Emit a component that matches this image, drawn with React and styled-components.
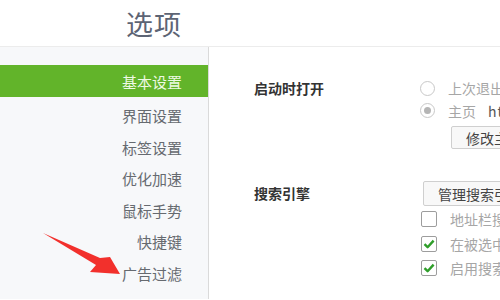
import React from 'react'
import styled, { createGlobalStyle } from 'styled-components'

const GlobalStyle = createGlobalStyle`
  html, body {
    margin: 0;
    padding: 0;
    background: #fff;
    overflow: hidden;
  }
  body {
    font-family: "Noto Sans CJK SC", "Noto Sans", sans-serif;
  }
`

const menu = ['基本设置', '界面设置', '标签设置', '优化加速', '鼠标手势', '快捷键', '广告过滤']

const Page = styled.div`
  position: relative;
  width: 500px;
  height: 300px;
  overflow: hidden;
`

const Header = styled.header`
  height: 47px;
  border-bottom: 1px solid #ececec;
  display: flex;
  align-items: center;
  padding-left: 126px;
  box-sizing: border-box;
  font-size: 27px;
  color: #5d6474;
  letter-spacing: 1px;
`

const Body = styled.div`
  display: flex;
  height: 252px;
`

const Sidebar = styled.nav`
  width: 209px;
  flex-shrink: 0;
  background: #f7f8fa;
  border-right: 1px solid #dadada;
  padding-top: 18px;
  box-sizing: border-box;
`

const MenuItem = styled.div`
  height: ${(p) => (p.$active ? '32px' : '31.5px')};
  margin-bottom: ${(p) => (p.$active ? '3px' : '0')};
  display: flex;
  align-items: center;
  justify-content: flex-end;
  padding-right: 26px;
  font-size: 15px;
  color: ${(p) => (p.$active ? '#eef9e4' : '#666a70')};
  background: ${(p) => (p.$active ? '#62b42a' : 'transparent')};
`

const Content = styled.main`
  flex: 1;
  padding: 31px 0 0 45px;
  box-sizing: border-box;
  overflow: hidden;
`

const Section = styled.section`
  display: grid;
  grid-template-columns: 165px 1fr;
  margin-bottom: ${(p) => p.$gap || 0}px;
`

const Label = styled.div`
  font-size: 14px;
  font-weight: 700;
  color: #333;
  height: ${(p) => p.$h}px;
  line-height: ${(p) => p.$h}px;
  white-space: nowrap;
`

const Controls = styled.div`
  display: flex;
  flex-direction: column;
  min-width: 0;
`

const OptionRow = styled.div`
  height: ${(p) => p.$h || 23}px;
  display: flex;
  align-items: center;
  gap: 13px;
  white-space: nowrap;
  font-size: 14px;
  color: #a6a6a6;
  padding-left: ${(p) => p.$indent || 0}px;
`

const Radio = styled.span`
  width: 15px;
  height: 15px;
  flex-shrink: 0;
  border-radius: 50%;
  border: 1px solid #c8c8c8;
  box-sizing: border-box;
  display: flex;
  align-items: center;
  justify-content: center;
  margin-left: 1px;

  &::after {
    content: '';
    width: 7px;
    height: 7px;
    border-radius: 50%;
    background: ${(p) => (p.$checked ? '#b5b5b5' : 'transparent')};
  }
`

const Check = styled.span`
  width: 16px;
  height: 16px;
  flex-shrink: 0;
  border: 1px solid #9d9d9d;
  border-radius: 2px;
  box-sizing: border-box;
  background: #fff;
  display: flex;
  align-items: center;
  justify-content: center;
`

const Url = styled.span`
  margin-left: 12px;
  color: #555;
  letter-spacing: 1px;
`

const Button = styled.div`
  height: ${(p) => p.$h}px;
  margin-left: ${(p) => p.$indent || 0}px;
  margin-top: ${(p) => p.$top || 0}px;
  border: 1px solid #cfcfcf;
  border-radius: 2px;
  background: #f8f8f8;
  box-sizing: border-box;
  padding-left: 14px;
  display: flex;
  align-items: center;
  white-space: nowrap;
  font-size: 14px;
  color: #444;
  width: 140px;
`

const Arrow = styled.svg`
  position: absolute;
  left: 0;
  top: 0;
  pointer-events: none;
`

const Tick = () => (
  <svg width="12" height="10" viewBox="0 0 12 10">
    <path d="M1.5 5.2 L4.6 8.2 L10.6 1.6" fill="none" stroke="#2f9e2a" strokeWidth="2.4" strokeLinejoin="round" />
  </svg>
)

export default function App() {
  return (
    <Page>
      <GlobalStyle />
      <Header>选项</Header>
      <Body>
        <Sidebar>
          {menu.map((m, i) => (
            <MenuItem key={m} $active={i === 0}>{m}</MenuItem>
          ))}
        </Sidebar>
        <Content>
          <Section $gap={32}>
            <Label $h={20}>启动时打开</Label>
            <Controls>
              <OptionRow $h={20}>
                <Radio />
                <span>上次退出时打开的页面</span>
              </OptionRow>
              <OptionRow $h={25}>
                <Radio $checked />
                <span>主页<Url>http://www.hao123.com</Url></span>
              </OptionRow>
              <Button $h={23} $indent={32} $top={3}>修改主页</Button>
            </Controls>
          </Section>
          <Section>
            <Label $h={25}>搜索引擎</Label>
            <Controls>
              <Button $h={25} $indent={4}>管理搜索引擎</Button>
              <OptionRow $h={26} $indent={2}>
                <Check />
                <span>地址栏搜索</span>
              </OptionRow>
              <OptionRow $h={24} $indent={2}>
                <Check><Tick /></Check>
                <span>在被选中的文字上</span>
              </OptionRow>
              <OptionRow $h={23} $indent={2}>
                <Check><Tick /></Check>
                <span>启用搜索建议</span>
              </OptionRow>
            </Controls>
          </Section>
        </Content>
      </Body>
      <Arrow width="500" height="300" viewBox="0 0 500 300">
        <polygon points="43,233 100,258 110,257 120,274 90,272 96,265" fill="#f2302c" />
      </Arrow>
    </Page>
  )
}
